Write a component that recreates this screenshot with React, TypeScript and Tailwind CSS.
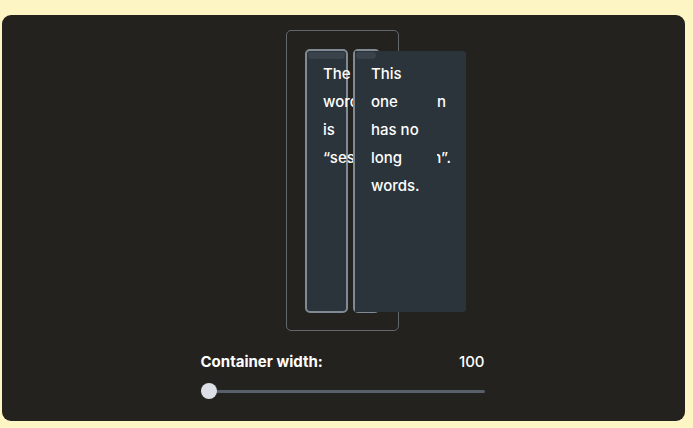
const font = { fontFamily: 'Inter, "Noto Sans", sans-serif' };

function Card({ width, children }: { width: string; children?: React.ReactNode }) {
  return (
    <div className={`relative ${width} h-[264px] shrink-0 rounded-[5px] border-2 border-[#808a94] bg-[#2b333b]`}>
      <div className="mx-[1px] mt-[1px] h-[7px] rounded-b-[4px] rounded-t-[3px] bg-[#3a434c]" />
      {children}
    </div>
  );
}

export default function App() {
  return (
    <div className="h-[428px] w-[693px] bg-[#fef5c4] pl-[2px] pr-[8px] pt-[15px] pb-[7px]" style={font}>
      <div className="flex h-[406px] flex-col items-center rounded-[9px] bg-[#24221e] pr-[2px] pt-[15px]">
        {/* resizable container */}
        <div className="flex h-[301px] w-[113px] gap-[5px] rounded-[5px] border border-[#62676c] p-[18px]">
          <Card width="w-[43px]">
            <div className="absolute left-[16px] top-[9px] whitespace-nowrap text-[15px] font-medium leading-[28px] text-white">
              <div>The</div>
              <div>word</div>
              <div>is</div>
              <div>“sesquipedalian”.</div>
            </div>
          </Card>
          <Card width="w-[27px]">
            <div className="absolute left-[0px] top-[0px] h-[261px] w-[111px] rounded-r-[3px] bg-[#2b333b]">
              <div className="ml-[1px] mt-[1px] h-[7px] w-[20px] rounded-b-[4px] rounded-t-[3px] bg-[#3a434c]" />
              <div className="absolute left-[16px] top-[9px] w-[94px] text-[15px] font-medium leading-[28px] text-white">
                <div>This</div>
                <div className="flex">
                  <span>one</span>
                  <span className="ml-auto mr-[19px]">n</span>
                </div>
                <div>has no</div>
                <div className="flex">
                  <span>long</span>
                  <span className="ml-auto mr-[14px] flex w-[14px] justify-end overflow-hidden">
                    <span className="shrink-0">n”.</span>
                  </span>
                </div>
                <div>words.</div>
              </div>
            </div>
          </Card>
        </div>

        {/* slider */}
        <div className="mt-[22px] w-[284px]">
          <div className="flex items-center justify-between text-[15px] leading-[18px] text-white">
            <span className="font-bold">Container width:</span>
            <span className="font-medium">100</span>
          </div>
          <div className="relative mt-[12px] flex h-[16px] items-center">
            <div className="h-[3px] w-full rounded-full bg-[#57606a]" />
            <div className="absolute left-0 top-0 h-[16px] w-[16px] rounded-full bg-[#dce0e6]" />
          </div>
        </div>
      </div>
    </div>
  );
}
